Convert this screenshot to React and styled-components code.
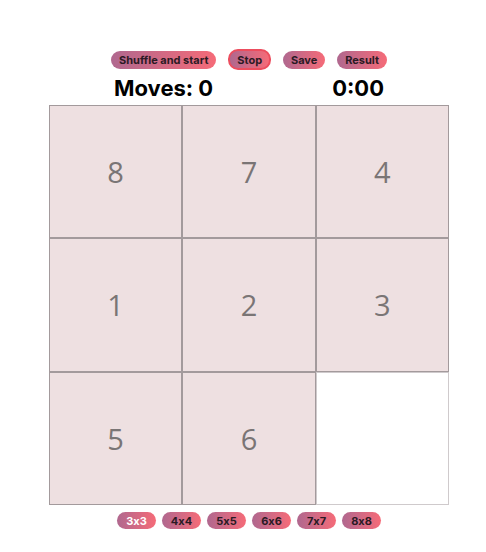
import React, { useState } from 'react';
import styled, { createGlobalStyle, css } from 'styled-components';

const GlobalStyle = createGlobalStyle`
  body {
    margin: 0;
    background: #ffffff;
    font-family: Inter, "Liberation Sans", sans-serif;
  }
`;

const SIZES = [3, 4, 5, 6, 7, 8];
const TILES = [8, 7, 4, 1, 2, 3, 5, 6, 0];

const App = () => {
  const [size] = useState(3);

  return (
    <Page>
      <GlobalStyle />
      <Header>
        <Controls>
          <PillButton>Shuffle and start</PillButton>
          <PillButton active>Stop</PillButton>
          <PillButton>Save</PillButton>
          <PillButton>Result</PillButton>
        </Controls>
        <Stats>
          <StatText>Moves: 0</StatText>
          <StatText>0:00</StatText>
        </Stats>
      </Header>
      <Board size={size}>
        {TILES.map((n) => (n === 0 ? <EmptyCell key="empty" /> : <Tile key={n}>{n}</Tile>))}
      </Board>
      <SizeBar>
        {SIZES.map((s) => (
          <SizeButton key={s} selected={s === size}>{`${s}x${s}`}</SizeButton>
        ))}
      </SizeBar>
    </Page>
  );
};

const Page = styled.div`
  width: 400px;
  margin: 0 auto;
  padding: 49px 0 0 12px;
  display: flex;
  flex-direction: column;
  align-items: center;
`;

const Header = styled.div`
  width: 276px;
  display: flex;
  flex-direction: column;
`;

const Controls = styled.div`
  height: 21px;
  display: flex;
  align-items: center;
  justify-content: space-between;
`;

const pill = css`
  border: none;
  border-radius: 10px;
  background: linear-gradient(to right, #b0688f, #f56b78);
  color: #2b1a24;
  font-family: Inter, "Liberation Sans", sans-serif;
  font-feature-settings: "calt" 0;
  font-weight: 700;
  font-size: 11px;
  cursor: pointer;
`;

const PillButton = styled.button`
  ${pill}
  height: 18px;
  padding: 0 8px;
  ${(props) => props.active && css`
    height: 21px;
    border: 2px solid #ec4d5e;
    padding: 0 7px;
  `}
`;

const Stats = styled.div`
  height: 35px;
  display: flex;
  align-items: center;
  justify-content: space-between;
  padding: 0 3px;
`;

const StatText = styled.span`
  font-size: 22px;
  font-weight: 700;
  color: #000000;
`;

const Board = styled.div`
  width: 400px;
  height: 400px;
  display: grid;
  grid-template-columns: repeat(${(props) => props.size}, 1fr);
  grid-template-rows: repeat(${(props) => props.size}, 1fr);
`;

const Tile = styled.div`
  box-sizing: border-box;
  display: flex;
  align-items: center;
  justify-content: center;
  background: #eee0e1;
  border: 1px solid #a39a9c;
  color: #7a7575;
  font-family: "Open Sans", sans-serif;
  font-size: 29px;
  font-weight: 400;
`;

const EmptyCell = styled.div`
  box-sizing: border-box;
  background: #ffffff;
  border: 1px solid #cfcacc;
`;

const SizeBar = styled.div`
  margin-top: 7px;
  display: flex;
  gap: 6px;
`;

const SizeButton = styled.button`
  ${pill}
  height: 17px;
  width: 39px;
  padding: 0;
  color: ${(props) => (props.selected ? '#ffffff' : '#2b1a24')};
`;

export default App;
